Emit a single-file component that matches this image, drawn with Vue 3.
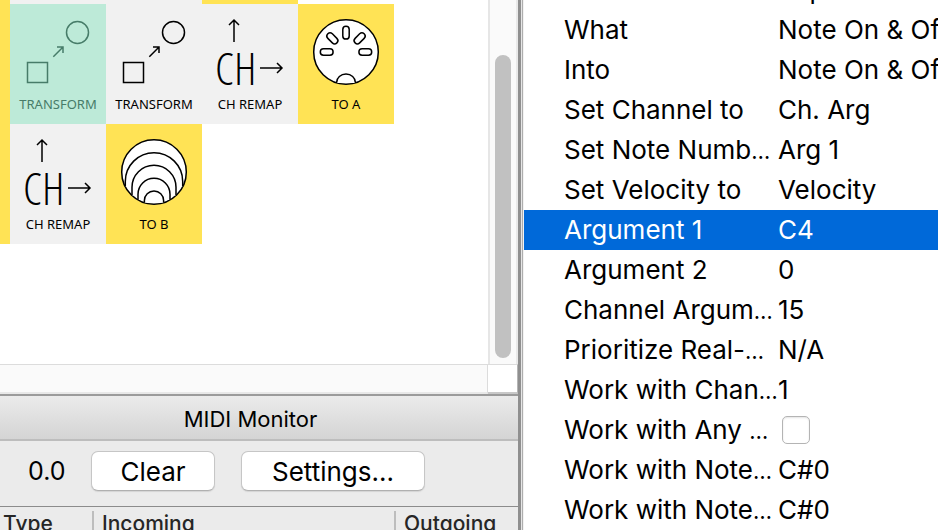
<script setup>
import { ref } from 'vue'

const tiles = [
  { kind: 'blank', tone: 'yellow' },
  { kind: 'blank', tone: 'grey' },
  { kind: 'blank', tone: 'grey' },
  { kind: 'blank', tone: 'yellow' },
  { kind: 'blank', tone: 'none' },
  { kind: 'blank', tone: 'yellow' },
  { kind: 'transform', tone: 'grey', label: 'TRANSFORM', selected: true },
  { kind: 'transform', tone: 'grey', label: 'TRANSFORM' },
  { kind: 'remap', tone: 'grey', label: 'CH REMAP' },
  { kind: 'portA', tone: 'yellow', label: 'TO A' },
  { kind: 'blank', tone: 'yellow' },
  { kind: 'remap', tone: 'grey', label: 'CH REMAP' },
  { kind: 'portB', tone: 'yellow', label: 'TO B' },
]

const slotAngles = [-90, -45, 0, 45, 90]

const rows = ref([
  { name: '', value: 'Replace' },
  { name: 'What', value: 'Note On & Off' },
  { name: 'Into', value: 'Note On & Off' },
  { name: 'Set Channel to', value: 'Ch. Arg' },
  { name: 'Set Note Numb', cut: true, value: 'Arg 1' },
  { name: 'Set Velocity to', value: 'Velocity' },
  { name: 'Argument 1', value: 'C4' },
  { name: 'Argument 2', value: '0' },
  { name: 'Channel Argum', cut: true, value: '15' },
  { name: 'Prioritize Real-', cut: true, value: 'N/A' },
  { name: 'Work with Chan', cut: true, value: '1' },
  { name: 'Work with Any ', cut: true, check: true, value: false },
  { name: 'Work with Note', cut: true, value: 'C#0' },
  { name: 'Work with Note', cut: true, value: 'C#0' },
])
const active = ref(6)
</script>

<template>
  <div class="window">
    <section class="left">
      <div class="canvas">
        <div class="sheet">
          <div class="tiles">
            <div
              v-for="(t, i) in tiles"
              :key="i"
              class="tile"
              :class="[t.tone, { selected: t.selected }]"
            >
              <svg v-if="t.kind === 'transform'" class="icon" viewBox="0 0 96 88">
                <circle cx="67.5" cy="28.5" r="11" />
                <rect x="17.5" y="58.5" width="20" height="20" />
                <path d="M43.3 52.7 52.8 43.2M47 43h6v6" />
              </svg>
              <svg v-else-if="t.kind === 'remap'" class="icon" viewBox="0 0 96 88">
                <path d="M32 38V16M27 21l5-5 5 5M58 64h22M75 59l5 5-5 5" />
                <text x="13" y="81" class="glyph">CH</text>
              </svg>
              <svg v-else-if="t.kind === 'portA'" class="icon white" viewBox="0 0 96 88">
                <circle cx="48" cy="48" r="32.3" />
                <rect
                  v-for="a in slotAngles"
                  :key="a"
                  x="44.8"
                  y="22.3"
                  width="6.4"
                  height="12.8"
                  rx="3.2"
                  :transform="`rotate(${a} 48 48)`"
                />
                <path d="M38.6 79v-.5a9.4 8.4 0 0 1 18.8 0v.5" />
              </svg>
              <svg v-else-if="t.kind === 'portB'" class="icon white" viewBox="0 0 96 88">
                <circle cx="48" cy="48" r="32.3" />
                <path d="M19.3 62.5V57.4a28.7 28.7 0 0 1 57.4 0v5.1" />
                <path d="M26 71.5V63.3a22 22 0 0 1 44 0v8.2" />
                <path d="M32 76V70.3a16 16 0 0 1 32 0V76" />
                <path d="M38.4 78.8V76.6a9.6 9.6 0 0 1 19.2 0v2.2" />
              </svg>
              <span v-if="t.label" class="label">{{ t.label }}</span>
            </div>
          </div>
        </div>
        <div class="vbar"><div class="thumb"></div></div>
        <div class="hbar"></div>
        <div class="corner"></div>
      </div>
      <h2 class="title">MIDI Monitor</h2>
      <div class="tools">
        <span class="time">0.0</span>
        <button type="button" class="clear">Clear</button>
        <button type="button" class="settings">Settings...</button>
      </div>
      <div class="log-view">
        <table class="log">
          <thead>
            <tr><th class="type">Type</th><th>Incoming</th><th class="out">Outgoing</th></tr>
          </thead>
        </table>
      </div>
    </section>
    <div class="divider"></div>
    <section class="right">
      <table class="props">
        <tbody>
          <tr v-for="(r, i) in rows" :key="i" :class="{ active: i === active }" @click="active = i">
            <th scope="row">
              <label :for="r.check ? 'any' : undefined">{{ r.name }}<span v-if="r.cut" class="more">…</span></label>
            </th>
            <td>
              <input v-if="r.check" id="any" v-model="r.value" type="checkbox" />
              <template v-else>{{ r.value }}</template>
            </td>
          </tr>
        </tbody>
      </table>
    </section>
  </div>
</template>

<style>
body {
  margin: 0;
  overflow: hidden;
}
</style>

<style scoped>
.window {
  display: grid;
  grid-template-columns: minmax(0, 518fr) 6px minmax(0, 414fr);
  grid-template-rows: minmax(0, 1fr);
  height: 100vh;
  overflow: hidden;
  background: #fff;
  color: #000;
  font-family: Inter, "Liberation Sans", sans-serif;
  font-size: 26px;
}
.left {
  display: flex;
  flex-direction: column;
  min-height: 0;
  background: #ebebeb;
}
.canvas {
  flex: 1;
  min-height: 0;
  display: grid;
  grid-template-columns: minmax(0, 1fr) 30px;
  grid-template-rows: minmax(0, 1fr) 30px;
  background: #fff;
  border-bottom: 2px solid #9b9b9b;
}
.sheet {
  overflow: hidden;
}
.tiles {
  display: grid;
  grid-template-columns: repeat(5, 96px);
  grid-auto-rows: 120px;
  margin: -116px 0 0 -86px;
}
.tile {
  display: flex;
  flex-direction: column;
  align-items: center;
}
.grey {
  background: #f1f1f1;
}
.yellow {
  background: #ffe355;
}
.selected {
  background: #bdead8;
  color: #477c69;
}
.icon {
  width: 96px;
  height: 88px;
  fill: none;
  stroke: currentColor;
  stroke-width: 1.5;
}
.white circle,
.white path,
.white rect {
  fill: #fff;
}
.glyph {
  fill: currentColor;
  stroke: none;
  font-family: "Open Sans Condensed Light", "Open Sans", sans-serif;
  font-size: 45px;
  font-weight: 300;
}
.label {
  font-family: "Noto Sans", "Open Sans", sans-serif;
  font-size: 13px;
  line-height: 24px;
}
.vbar {
  display: flex;
  flex-direction: column;
  align-items: center;
  padding: 55px 0 6px;
  border-left: 2px solid #e6e6e6;
  border-right: 2px solid #e9e9e9;
  background: #fafafa;
}
.thumb {
  flex: 1;
  width: 16px;
  border-radius: 8px;
  background: #c1c1c1;
}
.hbar {
  border-top: 1px solid #dcdcdc;
  border-right: 1px solid #dcdcdc;
  border-bottom: 2px solid #e8e8e8;
  background: #fafafa;
}
.corner {
  border-top: 1px solid #dcdcdc;
  border-right: 1px solid #b5b5b5;
  border-bottom: 2px solid #c8c8c8;
}
.title {
  margin: 0;
  padding: 3px 29px 0 12px;
  border-bottom: 2px solid #bdbdbd;
  background: linear-gradient(#ebebeb, #d4d4d4);
  font-size: 22px;
  font-weight: 400;
  line-height: 40px;
  text-align: center;
}
.tools {
  display: flex;
  align-items: center;
  padding: 10px 0 15px 28px;
}
.time {
  width: 63px;
  font-size: 25px;
}
button {
  height: 40px;
  padding: 0;
  border: 1px solid #c6c6c6;
  border-bottom-color: #b0b0b0;
  border-radius: 7px;
  background: #fff;
  box-shadow: 0 1px 1px #d4d4d4;
  color: inherit;
  font: inherit;
}
.clear {
  width: 124px;
  margin-right: 26px;
}
.settings {
  width: 184px;
}
.log-view {
  flex: none;
  height: 23px;
  overflow: hidden;
  border-top: 1px solid #8c8c8c;
}
.log {
  width: 100%;
  table-layout: fixed;
  border-collapse: collapse;
  color: #262626;
  font-size: 21px;
}
.log th {
  padding: 4px 0 0;
  font-weight: 500;
  text-align: left;
  line-height: 26px;
}
.log th + th::before {
  content: "";
  display: inline-block;
  width: 2px;
  height: 24px;
  margin-right: 8px;
  background: #bdbdbd;
  vertical-align: top;
}
.log .type {
  width: 89px;
  padding-left: 3px;
}
.log .out {
  width: 124px;
}
.divider {
  border-left: 3px solid #8f8f8f;
  border-right: 1px solid #f2f2f2;
  background: linear-gradient(90deg, #e6e6e6 50%, #adadad 50%);
}
.right {
  overflow: hidden;
}
.props {
  width: 100%;
  margin-top: -30px;
  table-layout: fixed;
  border-collapse: collapse;
}
.props tr {
  height: 40px;
}
.props th,
.props td {
  padding: 0;
  font-weight: 400;
  text-align: left;
  line-height: 40px;
  white-space: nowrap;
}
.props th {
  width: 213px;
  padding-left: 40px;
}
.props td {
  padding-left: 1px;
}
.more {
  font-size: 22px;
  line-height: 1;
}
.active {
  background: #0069d9;
  color: #fff;
}
input {
  appearance: none;
  display: block;
  width: 28px;
  height: 28px;
  margin: 0 0 0 4px;
  border: 1px solid #b4b4b4;
  border-radius: 5px;
  background: #fff;
  box-shadow: inset 0 1px 2px #e4e4e4;
}
</style>
